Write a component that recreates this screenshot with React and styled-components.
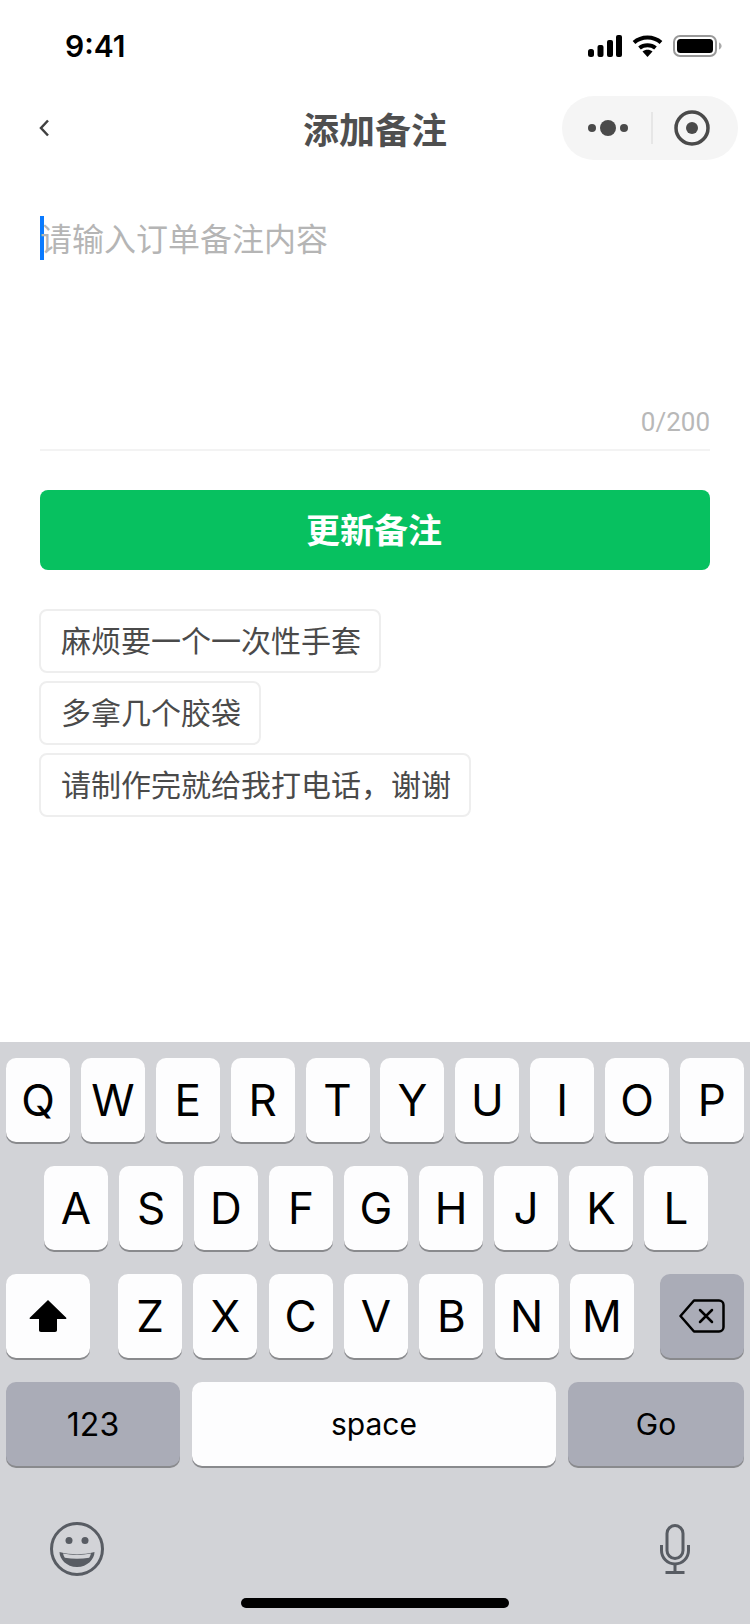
import styled, { createGlobalStyle } from "styled-components";

const ROW_ONE = ["Q", "W", "E", "R", "T", "Y", "U", "I", "O", "P"];
const ROW_TWO = ["A", "S", "D", "F", "G", "H", "J", "K", "L"];
const ROW_THREE = ["Z", "X", "C", "V", "B", "N", "M"];
const TAGS = ["麻烦要一个一次性手套", "多拿几个胶袋", "请制作完就给我打电话，谢谢"];

export default function App() {
  return (
    <Page>
      <GlobalStyle />
      <StatusBar>
        <Time>9:41</Time>
        <StatusIcons>
          <svg width="34" height="22" viewBox="0 0 34 22" fill="#000">
            <rect x="0" y="14" width="6" height="8" rx="2.5" />
            <rect x="9.5" y="10" width="6" height="12" rx="2" />
            <rect x="19" y="5" width="6" height="17" rx="2" />
            <rect x="28" y="0" width="6" height="22" rx="2" />
          </svg>
          <svg width="31" height="22" viewBox="0 0 31 22" fill="none" stroke="#000" strokeWidth="4">
            <path d="M2 7.5C9.5 .8 21.5 .8 29 7.5" />
            <path d="M7.5 13C12 9.2 19 9.2 23.5 13" />
            <path d="M10.5 16.5L15.5 22l5-5.500c-2.800-2.300-7.200-2.300-10 0z" fill="#000" stroke="none" />
          </svg>
          <svg width="49" height="22" viewBox="0 0 49 22">
            <rect x="1" y="1" width="42" height="20" rx="6" fill="none" stroke="#999" strokeWidth="2" />
            <rect x="4" y="4" width="36" height="14" rx="3.5" fill="#000" />
            <path d="M46 7.500c1.600.6 2.600 2 2.600 3.500s-1 2.900-2.600 3.500z" fill="#aaa" />
          </svg>
        </StatusIcons>
      </StatusBar>

      <NavBar>
        <BackIcon width="12" height="18" viewBox="0 0 12 18" fill="none" stroke="#404040" strokeWidth="2.500">
          <path d="M10 1.500L3 9l7 7.500" />
        </BackIcon>
        <NavTitle>添加备注</NavTitle>
        <Capsule>
          <svg width="40" height="16" viewBox="0 0 40 16" fill="#4a4a4a">
            <circle cx="4" cy="8" r="4" />
            <circle cx="20" cy="8" r="8" />
            <circle cx="36" cy="8" r="4" />
          </svg>
          <CapsuleDivider />
          <svg width="36" height="36" viewBox="0 0 36 36">
            <circle cx="18" cy="18" r="16" fill="none" stroke="#4a4a4a" strokeWidth="3.500" />
            <circle cx="18" cy="18" r="6" fill="#4a4a4a" />
          </svg>
        </Capsule>
      </NavBar>

      <Content>
        <NoteBox>
          <InputLine>
            <Caret />
            <Placeholder>请输入订单备注内容</Placeholder>
          </InputLine>
          <Counter>0/200</Counter>
        </NoteBox>
        <SubmitButton>更新备注</SubmitButton>
        <TagList>
          {TAGS.map((tag) => (
            <Tag key={tag}>{tag}</Tag>
          ))}
        </TagList>
      </Content>

      <Keyboard>
        <KeyRow>
          {ROW_ONE.map((k) => (
            <LetterKey key={k}>{k}</LetterKey>
          ))}
        </KeyRow>
        <HomeKeyRow>
          {ROW_TWO.map((k) => (
            <LetterKey key={k}>{k}</LetterKey>
          ))}
        </HomeKeyRow>
        <KeyRow>
          <ShiftKey>
            <svg width="38" height="32" viewBox="0 0 38 32" fill="#000">
              <path d="M19 0L37 17.500c.8.8.4 1.500-.6 1.500H28v11c0 1-.6 2-2 2H12c-1.400 0-2-1-2-2V19H1.600c-1 0-1.400-.7-.6-1.500z" />
            </svg>
          </ShiftKey>
          <LetterGroup>
            {ROW_THREE.map((k) => (
              <LetterKey key={k}>{k}</LetterKey>
            ))}
          </LetterGroup>
          <DeleteKey>
            <svg width="46" height="34" viewBox="0 0 46 34" fill="none" stroke="#000" strokeWidth="2.500">
              <path d="M15 1.500h25c2.500 0 4.500 2 4.500 4.500v22c0 2.500-2 4.500-4.500 4.500H15L1.500 17z" strokeLinejoin="round" />
              <path d="M21 11l12 12M33 11L21 23" strokeLinecap="round" />
            </svg>
          </DeleteKey>
        </KeyRow>
        <BottomRow>
          <ActionKey $width={174} $size={32}>123</ActionKey>
          <SpaceKey>space</SpaceKey>
          <ActionKey $width={176}>Go</ActionKey>
        </BottomRow>
        <ToolRow>
          <svg width="54" height="54" viewBox="0 0 54 54">
            <circle cx="27" cy="27" r="25.500" fill="none" stroke="#585c63" strokeWidth="3" />
            <circle cx="19" cy="18.500" r="3.500" fill="#585c63" />
            <circle cx="35" cy="18.500" r="3.500" fill="#585c63" />
            <path d="M9.500 30c11 3 24 3 35 0 0 7-7 15-17.500 15S9.500 37 9.500 30z" fill="#585c63" />
            <path d="M13 31.500c9 1.800 19 1.800 28 0-.4 1.600-1 3-1.800 4.300-8 1.200-16.400 1.200-24.400 0-.8-1.300-1.400-2.700-1.800-4.300z" fill="#d2d3d7" />
          </svg>
          <svg width="30" height="50" viewBox="0 0 30 50" fill="none" stroke="#585c63" strokeWidth="3">
            <rect x="7" y="1.500" width="16" height="33" rx="8" />
            <path d="M1.500 21v5.500a13.500 13.500 0 0 0 27 0V21" />
            <path d="M15 40v8M5.500 48.500h19" />
          </svg>
        </ToolRow>
        <HomeBar />
      </Keyboard>
    </Page>
  );
}

const GlobalStyle = createGlobalStyle`
  html, body {
    margin: 0;
    padding: 0;
    background: #fff;
  }
`;

const Page = styled.div`
  width: 750px;
  height: 1624px;
  display: flex;
  flex-direction: column;
  overflow: hidden;
  font-family: "Noto Sans CJK SC", "Inter", sans-serif;
`;

const StatusBar = styled.div`
  height: 88px;
  box-sizing: border-box;
  padding: 35px 28px 0 65px;
  display: flex;
  justify-content: space-between;
  align-items: flex-start;
`;

const Time = styled.div`
  font-family: "Inter", sans-serif;
  font-size: 30px;
  font-weight: 600;
  line-height: 22px;
  color: #000;
`;

const StatusIcons = styled.div`
  display: flex;
  gap: 10px;
`;

const NavBar = styled.div`
  height: 80px;
  box-sizing: border-box;
  padding: 0 12px;
  display: grid;
  grid-template-columns: 1fr auto 1fr;
  align-items: center;
`;

const BackIcon = styled.svg`
  margin-left: 26px;
`;

const NavTitle = styled.div`
  font-size: 36px;
  font-weight: 700;
  color: #4f4f4f;
`;

const Capsule = styled.div`
  justify-self: end;
  width: 176px;
  height: 64px;
  box-sizing: border-box;
  padding-left: 26px;
  border-radius: 32px;
  background: #f5f5f5;
  display: flex;
  align-items: center;
`;

const CapsuleDivider = styled.div`
  width: 2px;
  height: 32px;
  margin: 0 21px 0 23px;
  background: #e6e6e6;
`;

const Content = styled.div`
  flex: 1;
  padding: 48px 40px 0;
`;

const NoteBox = styled.div`
  height: 235px;
  box-sizing: border-box;
  padding-bottom: 13px;
  border-bottom: 2px solid #f3f3f3;
  display: flex;
  flex-direction: column;
`;

const InputLine = styled.div`
  display: flex;
  align-items: center;
  height: 44px;
`;

const Caret = styled.span`
  width: 4px;
  height: 44px;
  background: #0a7aff;
`;

const Placeholder = styled.span`
  margin: -2px 0 0 -4px;
  font-size: 32px;
  color: #b5b5b5;
`;

const Counter = styled.div`
  margin-top: auto;
  text-align: right;
  font-family: "Roboto", sans-serif;
  font-size: 26px;
  line-height: 28px;
  color: #b8b8b8;
`;

const SubmitButton = styled.button`
  display: block;
  width: 100%;
  height: 80px;
  margin-top: 39px;
  padding: 0 2px 4px 0;
  border: none;
  border-radius: 8px;
  background: #07c160;
  color: #fff;
  font-family: inherit;
  font-size: 34px;
  font-weight: 700;
`;

const TagList = styled.div`
  margin-top: 39px;
  display: flex;
  flex-direction: column;
  align-items: flex-start;
  gap: 8px;
`;

const Tag = styled.div`
  height: 64px;
  box-sizing: border-box;
  margin-left: -1px;
  padding: 0 18px 4px 20px;
  border: 2px solid #eeeeee;
  border-radius: 8px;
  display: flex;
  align-items: center;
  font-size: 30px;
  color: #4a4a4a;
`;

const Keyboard = styled.div`
  height: 582px;
  box-sizing: border-box;
  padding-top: 16px;
  background: #d2d3d7;
  display: flex;
  flex-direction: column;
  font-family: "Inter", sans-serif;
  color: #000;
`;

const KeyRow = styled.div`
  height: 84px;
  margin-bottom: 24px;
  padding: 0 6px;
  display: flex;
  justify-content: space-between;
`;

const HomeKeyRow = styled(KeyRow)`
  padding: 0 42px 0 44px;
`;

const BaseKey = styled.div`
  height: 84px;
  border-radius: 10px;
  box-shadow: 0 2px 0 #898a8d;
  display: flex;
  align-items: center;
  justify-content: center;
`;

const LetterKey = styled(BaseKey)`
  width: 64px;
  background: #fdfdfe;
  font-size: 44px;
`;

const LetterGroup = styled.div`
  width: 516px;
  margin-left: 2px;
  display: flex;
  justify-content: space-between;
`;

const ShiftKey = styled(BaseKey)`
  width: 84px;
  background: #fdfdfe;
`;

const DeleteKey = styled(BaseKey)`
  width: 84px;
  background: #aaacb7;
`;

const BottomRow = styled.div`
  height: 84px;
  padding: 0 6px;
  display: flex;
  gap: 12px;
`;

const ActionKey = styled(BaseKey)`
  width: ${(p) => p.$width}px;
  background: #aaacb7;
  font-size: ${(p) => p.$size || 30}px;
`;

const SpaceKey = styled(BaseKey)`
  flex: 1;
  background: #fdfdfe;
  font-size: 30px;
`;

const ToolRow = styled.div`
  height: 50px;
  margin-top: 58px;
  padding: 0 60px 0 50px;
  display: flex;
  justify-content: space-between;
  align-items: center;
`;

const HomeBar = styled.div`
  width: 268px;
  height: 10px;
  margin: 24px auto 0;
  border-radius: 5px;
  background: #000;
`;
